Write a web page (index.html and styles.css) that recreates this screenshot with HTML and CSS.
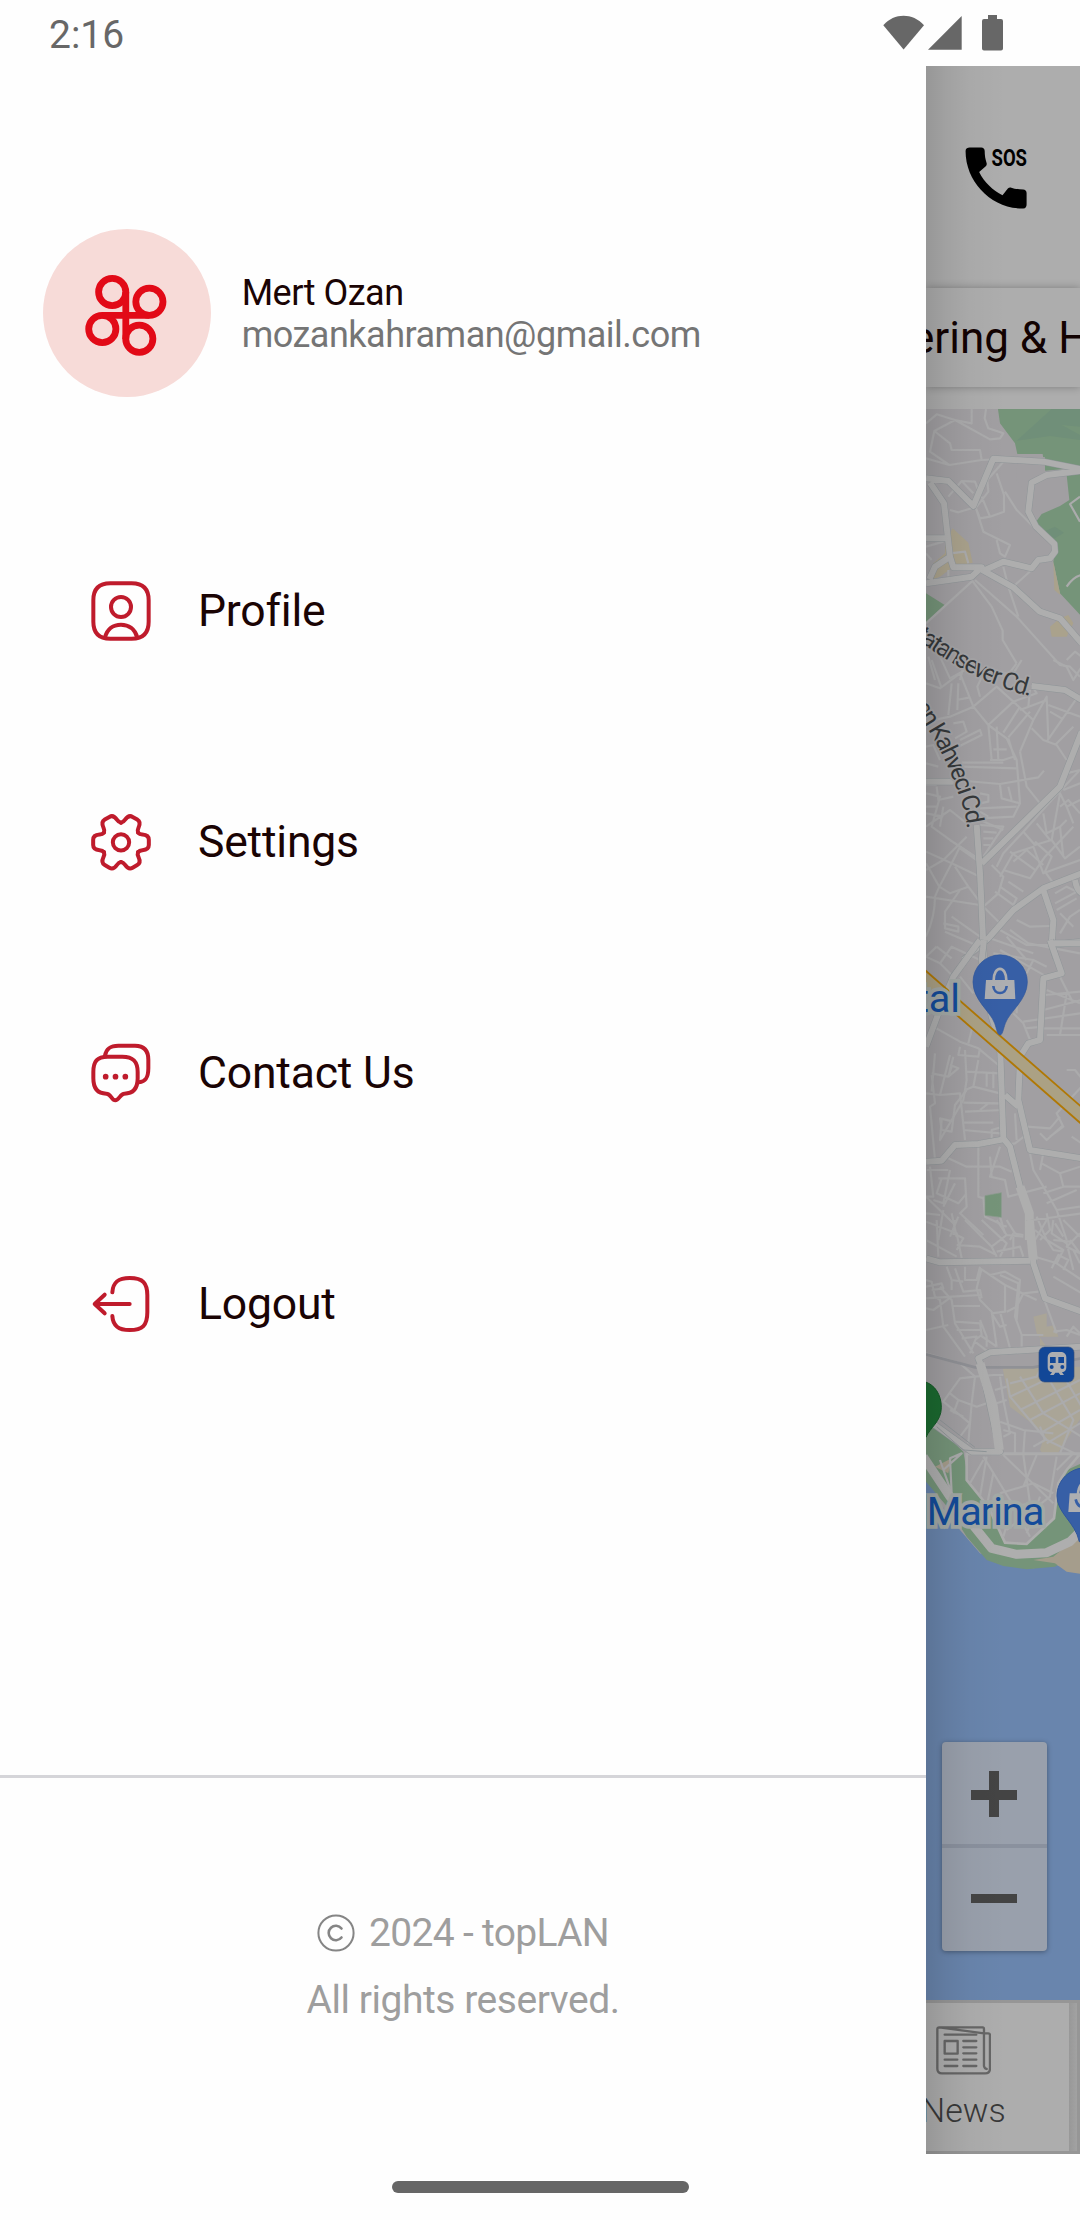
FILE: index.html
```html
<!DOCTYPE html>
<html lang="en">
<head>
<meta charset="utf-8">
<title>topLAN</title>
<link rel="stylesheet" href="styles.css">
</head>
<body>
<header class="status">
  <span class="clock">2:16</span>
  <svg class="status-icons" viewBox="880 10 130 46">
    <path d="M883.300 25.200C894.500 12.600 912.500 12.600 924 25.200L903.600 49.500Z"/>
    <path d="M928 49.800L961.700 16V49.800Z"/>
    <path d="M988 15h9v4h4a2 2 0 0 1 2 2v27.500a2 2 0 0 1-2 2h-17a2 2 0 0 1-2-2V21a2 2 0 0 1 2-2h4z"/>
  </svg>
</header>

<div class="screen">
  <aside class="drawer">
    <section class="account">
      <svg class="avatar" viewBox="42.700 229 168 168">
        <circle cx="126.700" cy="313" r="84" fill="#f7dbd8"/>
        <g fill="none" stroke="#e20a17" stroke-width="6.800">
          <circle cx="111.900" cy="292" r="13.600"/>
          <circle cx="149.100" cy="301.700" r="13.600"/>
          <circle cx="102" cy="329" r="13.600"/>
          <circle cx="139" cy="338.700" r="13.600"/>
          <path d="M125.500 292V339M102 315.300H149"/>
        </g>
      </svg>
      <div class="who">
        <p class="name">Mert Ozan</p>
        <p class="mail">mozankahraman@gmail.com</p>
      </div>
    </section>

    <nav class="menu">
      <a class="item">
        <svg class="icon" viewBox="0 0 180 180">
          <path d="M58 7H122C156 7 173 24 173 58V122C173 156 156 173 122 173H58C24 173 7 156 7 122V58C7 24 24 7 58 7Z"/>
          <circle cx="90" cy="78" r="30"/>
          <path d="M42 170C48 144 67 131 90 131S132 144 139 170"/>
        </svg>
        <span>Profile</span>
      </a>
      <a class="item">
        <svg class="icon" viewBox="0 0 180 180">
          <defs><path id="tooth" d="M-51 29.500Q-55.500 24 -64 23.500Q-83.500 22 -83.500 8V-8Q-83.500 -22 -64 -23.500Q-55.500 -24 -51 -29.500"/></defs>
          <g transform="translate(90 91)">
            <circle r="24.500"/>
            <use href="#tooth"/><use href="#tooth" transform="rotate(60)"/><use href="#tooth" transform="rotate(120)"/>
            <use href="#tooth" transform="rotate(180)"/><use href="#tooth" transform="rotate(240)"/><use href="#tooth" transform="rotate(300)"/>
          </g>
        </svg>
        <span>Settings</span>
      </a>
      <a class="item">
        <svg class="icon" viewBox="0 0 180 180">
          <g transform="translate(0 -2)">
            <path d="M50 43H94C126 43 140 57 140 89V108C140 140 126 154 100 154C88 154 84 174 73 174S60 154 46 154C20 154 7 140 7 108V89C7 57 18 43 50 43Z"/>
            <path d="M42 40C46 18 58 10 82 10H132C160 10 172 24 172 52V78C172 106 164 118 144 120"/>
            <g class="dots"><circle cx="44" cy="103" r="8.500"/><circle cx="73.500" cy="103" r="8.500"/><circle cx="103" cy="103" r="8.500"/></g>
          </g>
        </svg>
        <span>Contact Us</span>
      </a>
      <a class="item">
        <svg class="icon" viewBox="0 0 180 180">
          <path d="M64 55C66 24 82 12 116 12C156 12 169 27 169 64V115C169 154 155 168 116 168C82 168 66 156 64 126"/>
          <path d="M116 90H12M41 62L11 90L41 118"/>
        </svg>
        <span>Logout</span>
      </a>
    </nav>

    <footer class="legal">
      <p class="line">
        <svg class="copy" viewBox="0 0 38 38"><circle cx="19" cy="19" r="17.600"/><path d="M24.500 14.500A7.200 7.200 0 1 0 24.500 23.500"/></svg>
        <span class="brand">2024 - topLAN</span>
      </p>
      <p class="line rights">All rights reserved.</p>
    </footer>
  </aside>

  <main class="content">
    <div class="topbar">
      <svg class="sos" viewBox="0 0 64 64">
        <path transform="translate(-8.600 -9.600) scale(3.390)" d="M20.010 15.380c-1.230 0-2.420-.2-3.530-.56-.35-.12-.74-.03-1.010.24l-1.570 1.970c-2.830-1.350-5.480-3.900-6.890-6.830l1.950-1.660c.27-.28.35-.67.24-1.020-.37-1.110-.56-2.300-.56-3.530 0-.54-.45-.99-.99-.99H4.190C3.650 3 3 3.240 3 3.990 3 13.280 10.730 21 20.010 21c.71 0 .99-.63.99-1.180v-3.450c0-.54-.45-.99-.99-.99z"/>
        <text x="27.500" y="18.500" textLength="35.500" lengthAdjust="spacingAndGlyphs">SOS</text>
      </svg>
    </div>
    <div class="tabs"><span>ering &amp; H</span></div>

    <div class="map">
      <svg class="tiles" viewBox="926 409 154 1591">
        <defs>
          <path id="st1" d="M46 776C150 850 240 900 300 918C330 932 360 944 430 955"/>
          <path id="st2" d="M42 140L85 210C118 262 155 340 178 410C190 440 198 460 203 520"/>
        </defs>
        <rect x="926" y="409" width="154" height="1591" fill="#a19fa2"/>
        <g transform="translate(900 380) scale(.33333)">
          <g fill="#759479">
            <path d="M293 80H545V262L435 272V232L352 222L345 190L300 130Z"/>
            <path d="M545 272L500 285L508 360L480 378L425 402L405 430L468 500L460 545L480 640L545 710Z"/>
            <path d="M78 640L134 675L78 728Z"/>
          </g>
          <g fill="#708f79"><path d="M455 87L350 182L450 168L540 180V165L485 135L540 140V87Z"/><path d="M430 455L465 440L492 458L465 475Z"/></g>
          <path fill="#aaa28c" d="M158 445L205 488L218 548L160 560L120 590L95 600L100 550L135 520V485ZM460 545L481 645L463 630ZM480 715L505 705L520 730L500 770H455L450 740Z"/>
          <path fill="#a19fa2" d="M352 222H428L435 272L495 290L498 360L425 400L350 300Z"/>
          <g class="lane">
            <path d="M78 130L110 103L165 120L215 130V87M165 120L270 178L300 175L310 160L265 145L254 115L258 87M165 120L103 153L90 215L148 255L245 240L290 238M103 153L150 190L155 210H240L245 240M78 235L148 255"/>
            <path d="M145 350L185 303L225 305L240 345M185 303L220 340M150 390L175 397L230 380L265 335L262 300L310 245M290 280L312 345V395L270 410L240 415L228 385M245 350L270 410M315 335L350 390L400 440M228 385L250 455L330 495L315 530L300 520L290 480"/>
            <path d="M78 500L130 485M78 520L95 540M150 520L195 515L205 550M145 570V590M310 560L325 620L355 710M395 570L345 615M215 605L78 730M215 600L275 680L308 752V780L350 850M225 600L350 710L480 855L510 860L540 890M540 350L510 372L540 425M500 620Q520 590 545 585M500 840L525 815L545 830"/>
            <path d="M85 830L105 900M120 830L150 895L240 845M190 860L180 900M350 850L320 890M78 790L120 830"/>
          </g>
          <path class="edge" d="M78 295L145 303L220 378L280 236L430 245L545 268M545 272L440 285L395 308L385 395L408 440L463 492L465 515L450 535L415 540L395 565L310 545L250 572L340 622L420 695L480 715L545 790M78 475H145M90 308L132 370L150 530L160 562H245L215 590L78 610M88 598L105 560L150 530"/>
          <path class="road" d="M78 295L145 303L220 378L280 236L430 245L545 268M545 272L440 285L395 308L385 395L408 440L463 492L465 515L450 535L415 540L395 565L310 545L250 572L340 622L420 695L480 715L545 790M78 475H145M90 308L132 370L150 530L160 562H245L215 590L78 610M88 598L105 560L150 530"/>
        </g>
        <g transform="translate(900 660) scale(.33333)">
          <g class="lane">
            <path d="M78 70L120 85L180 40L220 140L265 195L275 300M220 140L150 170L78 185M95 0L125 85M155 70L145 165M175 70L172 150M170 120L210 112M220 140L290 80L340 125L400 180L360 275M240 110L232 80L250 40L340 40L365 0M340 125L265 195L320 235L350 300L360 430L340 470L240 475M340 125L410 100L395 75M360 150L440 120M400 180L440 110L445 240M445 135L540 170M450 155L490 178M440 245L530 115M395 205L430 240L470 255L500 300M465 255L520 200M290 200L295 300M325 235L345 300M325 232L390 155M310 218L360 140M280 268H320M270 300H310L340 290"/>
            <path d="M180 240L240 210L245 225L175 260M160 190L190 185L200 215L165 235M185 320L350 325M185 308H310M165 360L300 372L415 352L432 332M360 275L380 380L420 430M78 375H110M78 310L115 320M78 260L100 255L120 300M110 380L115 420L160 410M78 400L120 410L95 500L150 540L240 600M78 440H110M78 500L150 450L200 490M130 440L120 500M78 460L130 470M300 375L305 415L360 430M325 380L335 420M240 400L265 405V425L240 430M240 445L350 440M240 455L265 470M240 495L310 500L250 590M250 515L290 518M250 535L280 535M250 555L270 555"/>
            <path d="M78 575L155 610L180 560L225 590M155 610L240 650M155 610L118 680L78 610M78 710L240 735M118 680L105 710Q105 770 78 830M180 690L135 755V805L175 815V800L130 790M118 680L150 700L205 680L235 720M165 620L205 680M155 770L240 830M135 815L240 860M240 480L310 510M180 565L230 600M78 630L130 600L200 530"/>
            <path d="M290 620L310 580L370 515L455 420L540 330M275 615L310 650L295 700L250 740L300 790M300 650L340 580L400 560L430 640L540 600M310 630L390 655L435 590L520 500M340 605L380 570M380 570L430 615M330 575L405 630M405 545L455 590L435 635L460 670M455 540L495 595L540 560M455 540L405 555L370 515M455 540L480 400L500 440L540 420M410 490L450 540M490 390L540 370M500 440L520 490M430 460L440 520L480 500M500 480L480 500L490 590M500 340L540 330M480 440L505 420L540 460"/>
            <path d="M300 680L350 715L340 735L285 695M325 665L370 695M330 810L385 850L540 880M350 780L390 800L450 798M320 830L380 900M270 835L400 880M300 810L380 855H450M465 700L500 680L540 700M465 730L540 690M470 750L530 715M480 760L520 800M480 820L510 770L540 750M110 860L155 895M78 890L110 860M280 880L400 900M460 0L500 20L520 60L545 20M390 90L385 140"/>
          </g>
          <path class="edge" d="M395 78L495 90L545 120M545 215L480 380L245 610M230 495L240 640L252 900M190 900L265 835L340 750L430 685L545 640M430 690L460 780L455 855L470 900M455 855L545 845M78 365H165M525 660Q530 690 545 700"/>
          <path class="road" d="M395 78L495 90L545 120M545 215L480 380L245 610M230 495L240 640L252 900M190 900L265 835L340 750L430 685L545 640M430 690L460 780L455 855L470 900M455 855L545 845M78 365H165M525 660Q530 690 545 700"/>
        </g>
        <g transform="translate(900 940) scale(.33333)">
          <g class="lane">
            <path d="M78 50L120 70L160 110M120 70L155 20L240 60M340 220L370 250L390 300M430 210L545 180M370 245L540 220M430 265H540M375 265L430 260M500 160L480 285M435 165L540 155M440 150L540 190M480 110L520 190M440 285H545M350 170V220M180 110L220 160M300 30L370 70L440 110M380 100L400 60L440 80M100 260L180 305L235 325L295 375M205 310L220 250M180 320L175 345L235 350L240 325M95 400L145 410L155 380M150 345L120 465L78 460M105 340L95 455M195 330L200 420L190 480L120 600L125 540M95 405L105 490L90 500L105 660M150 375L175 385L145 410L160 350M235 360L220 440L300 460M200 395L300 400M195 450L220 440M260 395V440M280 395V445M120 465L180 460L195 600"/>
            <path d="M190 488L300 490M195 515L310 510M190 548H280M190 570L300 580M160 545L120 535L125 570L155 575L165 495L200 450M275 600V570L310 560M240 510L265 490M345 520L350 600M315 615L345 610L385 580L380 560L450 565L480 530M450 590L490 560L470 520L545 440M420 580L440 600L490 555M500 390H525L545 415M515 590L545 610M145 655L200 680H300L335 695M235 610V770L250 775M300 620L270 710L315 720L325 770L440 740M270 650L275 710M80 690H145M90 680L100 770L78 770L160 850"/>
            <path d="M115 715L195 715L200 800L180 820L250 885M150 690L130 790L100 780M125 715L110 760L175 790L200 760M165 730L130 800M175 830L150 890M130 810L115 900M78 820L120 825M155 820L170 890M250 770L255 830L320 860M300 830L315 880M390 640L400 690L430 740L470 810L500 900M425 670L480 700L490 740L430 760M480 700L540 680M430 640L420 690M540 740H500L490 740M440 790L530 750M470 810L540 800M400 840L545 820M410 830L440 900M440 820L450 870L420 900M465 850L490 890M330 900L340 880L370 885"/>
          </g>
          <path class="edge" d="M252 0L245 60L275 230L300 310L310 595L330 620L360 740L390 820V900M450 0L485 100L430 115L420 300L385 310L360 350L355 480L390 630L545 655M315 465L355 500M78 665L125 662L165 615L235 612L310 598M240 0L160 110L130 180L78 320M455 10H545"/>
          <path class="road" d="M252 0L245 60L275 230L300 310L310 595L330 620L360 740L390 820V900M450 0L485 100L430 115L420 300L385 310L360 350L355 480L390 630L545 655M315 465L355 500M78 665L125 662L165 615L235 612L310 598M240 0L160 110L130 180L78 320M455 10H545"/>
          <path class="road wide" d="M360 740L388 820V900"/>
          <path d="M60 103L560 540" fill="none" stroke="#b07804" stroke-width="44"/>
          <path d="M60 103L560 540" fill="none" stroke="#aba184" stroke-width="33"/>
          <path fill="#759479" stroke="#8a9c8c" stroke-width="2" d="M255 767L304 758V832L255 826Z"/>
        </g>
        <g transform="translate(900 1220) scale(.33333)">
          <path fill="#aaa597" d="M400 290L440 280V320L465 315L475 350H420V380H440L410 340ZM308 445L545 440V590L480 690L450 730L420 690L435 640L330 560Z"/>
          <path fill="#6985ad" d="M70 780L95 790L120 850L180 930L240 1000L320 1035L400 1045L470 1035L545 1060V2350H70Z"/>
          <path fill="#759479" d="M70 620L120 628L190 695L205 780L260 850L310 960L380 975L460 895L470 790L500 750L545 730V960L500 1020L465 1040L380 1048L310 1038L260 1020L200 950L150 870L78 785Z"/>
          <path fill="#a59d8c" d="M400 1020L460 1010L545 940V1062L500 1055L465 1030ZM105 740L155 715L145 760Z"/>
          <path fill="#a19fa2" stroke="#adadad" stroke-width="8" d="M200 702H540L500 750L475 790L462 895L380 972L315 968L265 860L200 780Z"/>
          <g class="lane">
            <path d="M78 60L170 110M110 0L115 110M78 5L170 40L185 115M165 0L160 45M170 75L240 80L290 105M160 40L190 55L170 90M195 0L275 80L320 45L370 50M245 0L320 70L300 110M320 45L290 0M340 45V110M275 80L290 110M290 95L360 80L370 110M320 0L345 40M78 110V30M78 180L95 185L105 230L120 240L130 320L195 410M78 235L155 230L240 225M78 265L100 270L155 230M78 330L145 315M95 210L130 205L125 190L78 200M140 140L155 180V210M165 145L190 215L240 210L245 235M155 180L190 185M195 140V180H230L240 140M120 200L155 240L165 310L220 400M155 258H240M165 305L240 310L245 345L225 360M170 330H240M185 355L230 350L210 400M225 365L270 400M240 345L290 380M245 145L230 205L240 240L275 275L290 380M240 145L315 195V275L275 280M300 275L330 385M275 280L300 320L320 315M300 165L355 190L345 290L365 345V380M270 165L315 155L360 180L350 300M315 195L410 240M320 275L350 260L370 220L415 215M365 345H430M435 245L470 340M460 335L500 330L540 345M500 350L520 320L540 340M240 300L260 350V380"/>
            <path d="M405 30L440 60L490 90L470 130L545 180M405 60L440 0M440 60L460 90L490 95M460 0L455 40L500 70L520 150M490 0L540 50M455 145L475 105L505 120L490 150M460 170L545 220M510 60L540 100L500 80L540 40M405 110L470 130M460 60L510 65M520 90L540 130"/>
            <path d="M78 400L180 430L225 470L280 465H310M225 470L180 475L130 545L210 610M150 520L175 540L160 580M175 540L230 560L260 550M225 470L215 550L205 670M190 590L150 570M210 610L180 650M300 470L310 540L330 640L310 650M285 510L320 500M290 550L320 540M300 605L370 630L460 640M310 630L345 640V700M375 630L370 700M320 475L330 530L440 660L545 710M360 470L430 580L545 650M430 450L520 600L480 700M480 450L545 560M500 450L330 530M540 480L360 570M540 520L390 600M540 570L420 640M540 610L440 670M330 490L410 470L420 450M400 680L435 660L420 620M310 700H540M250 710L330 840L390 950M310 705L460 850M210 790L250 720M240 830L260 710M280 760L260 860M370 705L390 850L300 870M420 830L380 940M470 710L450 830L320 930M300 820L400 790L460 820M410 705L370 800M340 850L310 950M520 700L470 750M130 750L185 700L150 715L155 820L120 720"/>
          </g>
          <path d="M78 403L225 442H400L545 415" fill="none" stroke="#909196" stroke-width="8"/>
          <path class="edge" d="M390 0L400 130L435 235L545 275M78 115L120 127L390 122M545 380L270 397L235 415L245 440L300 695H215L70 590M70 710L150 830L275 985L350 1005L440 1000L510 965L545 930"/>
          <path class="road" d="M390 0L400 130L435 235L545 275M78 115L120 127L390 122M545 380L270 397L235 415L245 440L300 695H215L70 590"/>
          <path class="road wide" d="M388 0L400 120M240 430L280 560L298 690M70 710L150 830L275 985L350 1003L440 998L510 965L545 930"/>
          <path class="rail-gap" d="M110 620L190 690L260 695M120 600L225 682"/>
        </g>

        <g transform="translate(900 380) scale(.33333)"><text class="street"><textPath href="#st1" textLength="388">tatansever Cd.</textPath></text></g>
        <g transform="translate(900 660) scale(.33333)"><text class="street"><textPath href="#st2" textLength="404">en Kahveci Cd.</textPath></text></g>

        <g transform="translate(900 940) scale(.33333)">
          <path fill="#375fa6" stroke="#2f569c" stroke-width="2" d="M300 285C292 285 290 266 284 250C272 215 219 180 219 126A81.500 81.500 0 0 1 382 126C382 180 328 215 316 250C310 266 308 285 300 285Z"/>
          <path fill="#adaeb1" d="M258 120H343L346 177H254Z"/>
          <path d="M281 121C281 75 319 75 319 121" fill="none" stroke="#adaeb1" stroke-width="8"/>
          <path d="M280 138C282 166 318 166 320 138" fill="none" stroke="#375fa6" stroke-width="8"/>
          <text class="place" x="48" y="215" textLength="132">tal</text>
        </g>
        <g transform="translate(900 1220) scale(.33333)">
          <rect x="417" y="381" width="105" height="105" rx="17" fill="#124797" stroke="#35507c" stroke-width="2"/>
          <path fill="#adaeb1" d="M456 396H486Q499 400 499 412V442Q499 456 486 457L492 465H481L476 458H466L461 465H450L456 457Q443 456 443 442V412Q443 400 456 396Z"/>
          <path fill="#124797" d="M450 411h17v18h-17zM475 411h17v18h-17z"/><circle cx="455" cy="441" r="6" fill="#124797"/><circle cx="487" cy="441" r="6" fill="#124797"/>
          <path fill="#1b6a30" stroke="#155a27" stroke-width="3" d="M70 484C105 492 124 525 124 562C124 605 90 622 78 652H70Z"/>
          <text class="place" x="80" y="914" textLength="353">Marina</text>
          <path fill="#375fa6" stroke="#2f569c" stroke-width="3" d="M560 743C510 743 471 780 471 828C471 880 525 905 538 965H560Z"/>
          <path fill="#adaeb1" d="M509 820H560V876H505Z"/>
          <path d="M534 822Q536 795 550 788" fill="none" stroke="#adaeb1" stroke-width="8"/>
          <path d="M527 838Q532 860 550 862" fill="none" stroke="#375fa6" stroke-width="8"/>
        </g>
      </svg>
      <div class="zoom">
        <button class="plus" aria-label="Zoom in"></button>
        <button class="minus" aria-label="Zoom out"></button>
      </div>
    </div>

    <div class="bottom">
      <div class="tab">
        <svg class="paper" viewBox="108 978 166 148">
          <path d="M118 982H248Q252 982 252 987V1098Q254 1106 260 1107M252 1000H265Q270 1000 270 1005V1106Q270 1120 256 1120H126Q112 1120 112 1106V988Q112 982 118 982Z" fill-rule="evenodd"/>
          <path d="M134 1004H229M190 1023H229M190 1042H229M190 1060H229M134 1079H172M190 1079H229M134 1098H172M190 1098H229M134 1023H173V1061H134Z"/>
        </svg>
        <span>News</span>
      </div>
      <div class="rail"></div>
    </div>
  </main>
</div>

<div class="gesture"><i class="pill"></i></div>
</body>
</html>
```
FILE: styles.css
```css
* { box-sizing: border-box; }
body {
  margin: 0;
  width: 1080px;
  height: 2220px;
  overflow: hidden;
  display: flex;
  flex-direction: column;
  background: #fefefe;
  font-family: Roboto, "Liberation Sans", sans-serif;
  color: #1a0404;
}
p { margin: 0; }

.status {
  height: 66px;
  display: flex;
  justify-content: space-between;
  padding: 10px 70px 0 49px;
}
.clock { font-size: 39px; line-height: 50px; color: #676767; }
.status-icons { width: 130px; height: 46px; fill: #676767; }

.screen { display: flex; height: 2088px; }

.drawer {
  width: 926px;
  display: flex;
  flex-direction: column;
}
.account {
  display: flex;
  align-items: center;
  padding: 163px 0 0 42.700px;
  gap: 31px;
}
.avatar { width: 168px; height: 168px; flex: none; }
.who { padding-top: 2px; font-size: 36px; line-height: 42px; letter-spacing: -.5px; }
.mail { color: #757575; }

.menu {
  display: flex;
  flex-direction: column;
  gap: 171px;
  padding: 184px 0 0 91px;
}
.item {
  display: flex;
  align-items: center;
  gap: 47px;
  height: 60px;
  font-size: 44.500px;
  line-height: 60px;
  letter-spacing: -.2px;
}
.icon {
  width: 60px;
  height: 60px;
  flex: none;
  overflow: visible;
  fill: none;
  stroke: #bf1b2c;
  stroke-width: 12;
  stroke-linecap: round;
  stroke-linejoin: round;
}
.dots { fill: #bf1b2c; stroke: none; }

.legal {
  margin-top: 441px;
  border-top: 3px solid #d5d5d9;
  padding-top: 121px;
  text-align: center;
  font-size: 39px;
  letter-spacing: -.46px;
  color: #9e9e9e;
}
.line { display: flex; justify-content: center; align-items: center; gap: 14px; height: 67px; }
.brand { letter-spacing: -.7px; }
.copy { width: 38px; height: 38px; fill: none; stroke: #858585; stroke-width: 2; stroke-linecap: round; }
.copy path { stroke-width: 2.600; }

.content {
  position: relative;
  width: 154px;
  display: flex;
  flex-direction: column;
  overflow: hidden;
  background: #adadad;
}
/* shade cast by the open drawer */
.content::after {
  content: "";
  position: absolute;
  inset: 0;
  background: linear-gradient(90deg, rgba(0,0,0,.13), rgba(0,0,0,.07) 20px, rgba(0,0,0,.025) 44px, transparent 80px);
}
.topbar { height: 222px; padding: 81px 0 0 38px; }
.sos { width: 64px; height: 64px; }
.sos text { font: 700 24px Roboto, sans-serif; }
.tabs {
  height: 99px;
  background: #adadad;
  box-shadow: 0 0 8px rgba(0,0,0,.28);
  white-space: nowrap;
}
.tabs span { display: block; margin-left: -15px; font-size: 44px; line-height: 100px; color: #120202; }

.map { position: relative; margin-top: 22px; height: 1591px; }
.tiles { display: block; width: 154px; height: 1591px; }
.lane { fill: none; stroke: #ababac; stroke-width: 6.500; stroke-linejoin: round; }
.road { fill: none; stroke: #aeaeae; stroke-width: 18; stroke-linejoin: round; }
.road.wide { stroke-width: 27; }
.edge { fill: none; stroke: #8f9598; stroke-width: 21; stroke-linejoin: round; }
.rail-gap { fill: none; stroke: #8f9598; stroke-width: 3; }
.street { font: 400 74px Roboto, sans-serif; fill: #35383a; stroke: #a5a4a6; stroke-width: 12; paint-order: stroke; stroke-linejoin: round; }
.place { font: 400 119px Roboto, sans-serif; fill: #134b9a; stroke: #a3a9a6; stroke-width: 22; paint-order: stroke; stroke-linejoin: miter; }

.zoom {
  position: absolute;
  left: 15.500px;
  top: 1332.500px;
  width: 105px;
  height: 209px;
  display: flex;
  flex-direction: column;
  border-radius: 4px;
  overflow: hidden;
  box-shadow: 0 1px 5px rgba(0,0,0,.35);
  background: #99a0ac;
}
.zoom button { flex: 1; border: 0; padding: 0; }
.zoom .plus {
  border-bottom: 4px solid #8a919e;
  background: linear-gradient(#444, #444) 50% 52% / 46px 10px no-repeat, linear-gradient(#444, #444) 50% 52% / 10px 46px no-repeat;
}
.zoom .minus { background: linear-gradient(#444, #444) 50% 49% / 46px 9px no-repeat; }

.bottom {
  height: 154px;
  display: flex;
  border-top: 3px solid #969696;
  border-bottom: 3px solid #969696;
  background: #adadad;
}
.tab {
  width: 143px;
  padding: 23px 0 0 10px;
  display: flex;
  flex-direction: column;
  flex: none;
}
.paper { width: 55.300px; height: 49.300px; fill: none; stroke: #666; stroke-width: 7; stroke-linecap: round; stroke-linejoin: round; }
.tab span { margin: 15px 0 0 -15px; font-size: 34px; font-weight: 300; line-height: 40px; color: #383838; }
.rail { flex: 1; background: linear-gradient(90deg, #989898, #a2a2a2 8px, #969696 8px); }

.gesture { height: 66px; display: flex; justify-content: center; padding-top: 27px; }
.pill { width: 297px; height: 12px; border-radius: 6px; background: #666; }
```
